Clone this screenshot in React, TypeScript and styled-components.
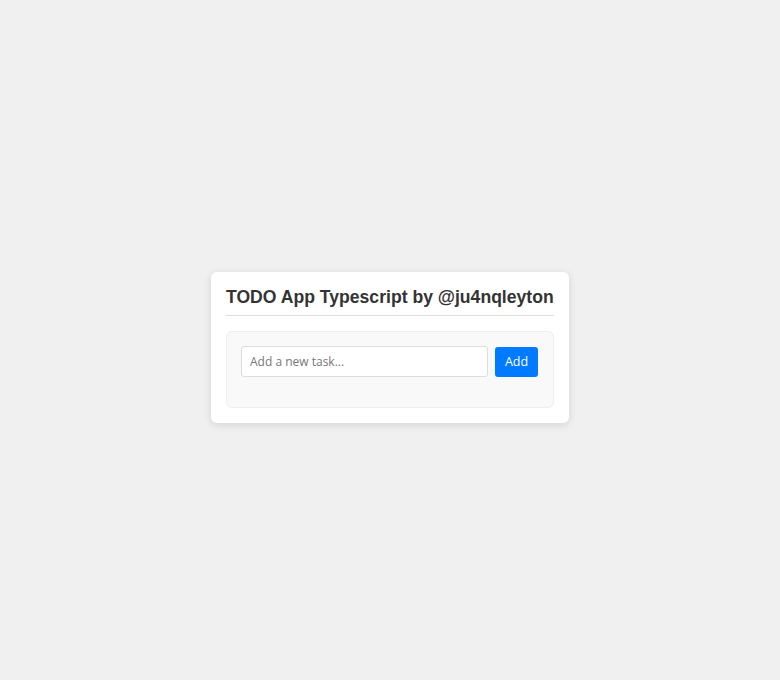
import { useState } from "react";
import { createGlobalStyle, styled } from "styled-components";

const GlobalStyle = createGlobalStyle`
  body {
    margin: 7px 8px 8px;
    background: #f0f0f0;
    font-family: "Open Sans", "Noto Sans", sans-serif;
  }
`;

const App = () => {
  const [task, setTask] = useState("");

  return (
    <>
      <GlobalStyle />
      <Page>
        <Card>
          <Title>TODO App Typescript by @ju4nqleyton</Title>
          <Panel>
            <Form onSubmit={(e) => e.preventDefault()}>
              <Input
                placeholder="Add a new task..."
                value={task}
                onChange={(e) => setTask(e.target.value)}
              />
              <AddButton type="submit">Add</AddButton>
            </Form>
          </Panel>
        </Card>
      </Page>
    </>
  );
};

export default App;

const Page = styled.div`
  min-height: 100vh;
  display: flex;
  align-items: center;
  justify-content: center;
`;

const Card = styled.div`
  width: 328px;
  padding: 15px;
  background: #fff;
  border-radius: 6px;
  box-shadow: 0 2px 8px rgba(0, 0, 0, 0.12);
`;

const Title = styled.h1`
  margin: 0 0 15px;
  padding-bottom: 7px;
  border-bottom: 1px solid #ddd;
  font-family: "Liberation Sans", Arial, sans-serif;
  font-size: 17.6px;
  font-weight: 700;
  color: #333;
  line-height: 21px;
  white-space: nowrap;
`;

const Panel = styled.div`
  padding: 14px 15px 30px 14px;
  background: #f9f9f9;
  border: 1px solid #eee;
  border-radius: 6px;
`;

const Form = styled.form`
  display: flex;
  align-items: center;
  gap: 7px;
`;

const Input = styled.input`
  flex: 1;
  height: 31px;
  box-sizing: border-box;
  padding: 0 8px;
  border: 1px solid #ddd;
  border-radius: 3px;
  background: #fff;
  font-family: "Open Sans", sans-serif;
  font-size: 12px;
  color: #333;
  outline: none;

  &::placeholder {
    color: #777;
  }
`;

const AddButton = styled.button`
  width: 43px;
  height: 30px;
  margin-top: 1px;
  border: none;
  border-radius: 3px;
  background: #007bff;
  color: #fff;
  font-family: "Open Sans", sans-serif;
  font-size: 12.5px;
  cursor: pointer;
`;
